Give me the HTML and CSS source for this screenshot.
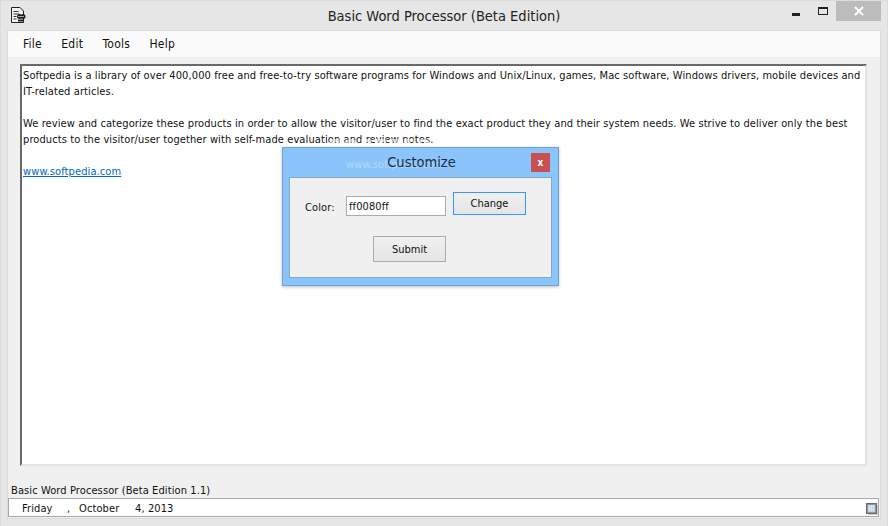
FILE: index.html
```html
<!DOCTYPE html>
<html lang="en">
<head>
<meta charset="utf-8">
<title>Basic Word Processor (Beta Edition)</title>
<link rel="stylesheet" href="styles.css">
</head>
<body>
<div class="window">
  <header class="titlebar">
    <svg class="app-icon" width="15" height="16" viewBox="0 0 15 16">
      <path d="M0.500 0.500h8.500l3.500 3.500v11.500h-12z" fill="#f2f2f2" stroke="#222"/>
      <path d="M2.500 4.500h5M2.500 7h6M2.500 9.500h3M2.500 12h3" stroke="#333"/>
      <circle cx="8.500" cy="9.500" r="2.500" fill="#222"/>
      <circle cx="12" cy="9.500" r="2.500" fill="#222"/>
      <path d="M7 9.500h6" stroke="#aaa"/>
      <path d="M7 13.500h5" stroke="#222" stroke-width="2"/>
    </svg>
    <h1 class="title">Basic Word Processor (Beta Edition)</h1>
    <div class="controls">
      <span class="min"></span>
      <span class="max"></span>
      <span class="close">
        <svg width="10" height="10" viewBox="0 0 10 10"><path d="M1 1l8 8M9 1l-8 8" stroke="#fff" stroke-width="2"/></svg>
      </span>
    </div>
  </header>
  <div class="client">
    <nav class="menubar">
      <span>File</span><span>Edit</span><span>Tools</span><span>Help</span>
    </nav>
    <main class="workspace">
      <div class="editor">
        <p>Softpedia is a library of over 400,000 free and free-to-try software programs for Windows and Unix/Linux, games, Mac software, Windows drivers, mobile devices and IT-related articles.</p>
        <p>We review and categorize these products in order to allow the visitor/user to find the exact product they and their system needs. We strive to deliver only the best products to the visitor/user together with self-made evaluation and review notes.</p>
        <p><a href="#">www.softpedia.com</a></p>
      </div>
    </main>
    <div class="caption">Basic Word Processor (Beta Edition 1.1)</div>
    <div class="datebar">
      <span class="date"><span>Friday</span><span>,</span><span>October</span><span>4, 2013</span></span>
      <span class="calendar">
        <svg width="12" height="12" viewBox="0 0 12 12">
          <rect x="0.750" y="0.750" width="9.500" height="9.500" fill="#b9c9de" stroke="#6e6a6a" stroke-width="1.500"/>
          <path d="M11.500 2v9.500H2" fill="none" stroke="#d0d0d0"/>
          <path d="M2 3.500h6.500M2 5.500h6.500M2 7.500h6.500M3.500 2v6.500M5.500 2v6.500M7.500 2v6.500" stroke="#e6ecf5" stroke-width="0.700"/>
        </svg>
      </span>
    </div>
  </div>
</div>

<div class="watermark">SOFTPEDIA</div>
<section class="dialog">
  <div class="watermark-url">www.softpedia.com</div>
  <div class="dialog-head">
    <h2>Customize</h2>
    <span class="dialog-close">x</span>
  </div>
  <div class="dialog-body">
    <div class="row">
      <label class="lbl" for="color">Color:</label>
      <input id="color" class="field" value="ff0080ff">
      <button class="btn focused">Change</button>
    </div>
    <button class="btn submit">Submit</button>
  </div>
</section>
</body>
</html>
```
FILE: styles.css
```css
* { box-sizing: border-box; }
html, body { margin: 0; height: 100%; }
body { width: 888px; height: 526px; overflow: hidden; position: relative; background: #e6e6e6; font-family: "DejaVu Sans Condensed", "DejaVu Sans", sans-serif; font-stretch: condensed; font-size: 11px; letter-spacing: 0.100px; color: #111; }
.window { height: 526px; display: flex; flex-direction: column; padding: 0 6px 7px; border: 1px solid #dcdcdc; border-bottom: 0; }
.titlebar { height: 29px; flex: none; position: relative; display: flex; justify-content: center; align-items: center; }
.app-icon { position: absolute; left: 4px; top: 6px; }
.title { margin: 0; font: inherit; font-size: 14.500px; letter-spacing: 0; color: #222; }
.controls { position: absolute; right: 0; top: 0; display: flex; align-items: flex-start; }
.min { width: 8px; height: 3px; background: #222; margin: 12px 18px 0 0; }
.max { width: 10px; height: 8px; border: 1px solid #222; border-top-width: 2px; margin: 6px 8px 0 0; }
.close { width: 45px; height: 20px; background: #bcbcbc; display: flex; align-items: center; justify-content: center; }
.client { flex: 1; display: flex; flex-direction: column; background: #f0f0f0; border: 1px solid #dcdcdc; min-height: 0; }
.menubar { height: 26px; flex: none; background: #fbfbfb; display: flex; align-items: center; gap: 19.300px; padding: 0 0 0 15px; font-size: 12px; letter-spacing: 0.250px; }
.workspace { flex: 1; min-height: 0; padding: 7px 13px 15px 12px; display: flex; }
.editor { flex: 1; background: #fff; border: 2px solid; border-color: #696969 #e3e3e3 #e3e3e3 #696969; padding: 2px 0 0 1px; line-height: 16.300px; overflow: hidden; }
.editor p { margin: 0 0 15.500px; }
.editor a { color: #0066cc; }
.caption { height: 17px; flex: none; padding-left: 3px; line-height: 19px; }
.datebar { height: 19px; flex: none; margin: 0 1px 1px 0; padding-top: 1px; background: #fff; border: 1px solid #a9a9a9; display: flex; align-items: center; justify-content: space-between; }
.date { display: flex; padding-left: 13px; }
.date span:nth-child(1) { width: 45px; }
.date span:nth-child(2) { width: 12px; }
.date span:nth-child(3) { width: 56px; }
.calendar { display: flex; margin: 1px 0 0; }
.watermark { position: absolute; left: 328px; top: 136px; font-weight: 700; font-size: 21px; line-height: 24px; color: rgba(255,255,255,.6); letter-spacing: 1px; }
.dialog { position: absolute; left: 282px; top: 147px; width: 277px; height: 139px; background: #8bc4fb; border: 1px solid #6ea2d6; box-shadow: 0 1px 3px rgba(0,0,0,.25); padding: 0 6px 7px; display: flex; flex-direction: column; }
.watermark-url { position: absolute; left: 63px; top: 10px; color: rgba(255,255,255,.35); }
.dialog-head { height: 29px; flex: none; position: relative; display: flex; justify-content: center; align-items: center; }
.dialog-head h2 { margin: 0 0 2px 2px; font: inherit; font-size: 14.500px; letter-spacing: 0; color: #1f2d3d; }
.dialog-close { position: absolute; right: 2px; top: 5px; width: 19px; height: 19px; background: #c75050; color: #fff; font-weight: 700; font-size: 10px; display: flex; align-items: center; justify-content: center; }
.dialog-body { flex: 1; background: #f0f0f0; border: 1px solid #7fa8cf; padding: 14px 0 0 15px; display: flex; flex-direction: column; }
.row { display: flex; align-items: flex-start; }
.lbl { width: 41px; margin-top: 9px; }
.field { width: 100px; height: 20px; margin-top: 4px; border: 1px solid #ababab; background: #fff; padding: 0 2px; font: inherit; letter-spacing: 0.100px; color: #111; }
.btn { font: inherit; letter-spacing: 0; color: #111; background: linear-gradient(#f0f0f0, #e5e5e5); border: 1px solid #acacac; padding: 0; }
.focused { width: 73px; height: 23px; margin-left: 7px; border-color: #3399ff; }
.submit { width: 73px; height: 26px; margin: 20px 0 0 68px; }
```
